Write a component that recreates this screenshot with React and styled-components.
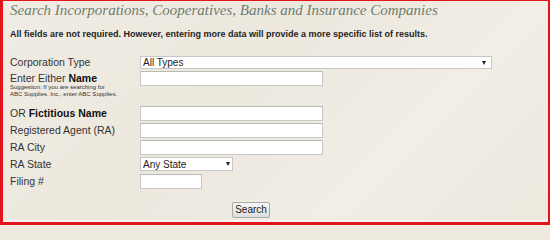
import React from "react";
import styled, { createGlobalStyle } from "styled-components";

const Global = createGlobalStyle`
  html, body { margin: 0; padding: 0; background: #efeae0; }
  body { font-family: "Liberation Sans", Arial, sans-serif; }
  * { box-sizing: border-box; }
`;

const Frame = styled.div`
  width: 550px;
  height: 225px;
  border: 2px solid #e3141c;
  border-left-width: 3px;
  border-top-width: 1px;
  border-bottom-width: 3px;
  background: linear-gradient(135deg, #f1ece3 0%, #ede8de 40%, #f2ede5 70%, #eee9df 100%);
  padding: 0 0 0 7px;
  box-shadow: inset 0 -2px 0 #f6f3ee;
  overflow: hidden;
`;

const Title = styled.h1`
  margin: 0;
  font-family: "Liberation Serif", Georgia, serif;
  font-style: italic;
  font-weight: normal;
  font-size: 15px;
  line-height: 18px;
  color: #6f7e70;
  white-space: nowrap;
`;

const Intro = styled.p`
  margin: 10px 0 0;
  font-size: 9px;
  line-height: 10px;
  font-weight: bold;
  color: #1e1e1e;
  white-space: nowrap;
`;

const Form = styled.form`
  display: flex;
  flex-direction: column;
  gap: 2px;
  margin-top: 17px;
`;

const Row = styled.div`
  display: flex;
  align-items: ${(p) => (p.$top ? "flex-start" : "center")};
  height: ${(p) => (p.$h ? `${p.$h}px` : "auto")};
`;

const LabelCell = styled.div`
  width: 130px;
  flex: none;
  display: flex;
  flex-direction: column;
`;

const Label = styled.label`
  font-size: 10.5px;
  line-height: ${(p) => p.$lh || 15}px;
  color: #333;
  white-space: nowrap;
  b { color: #111; }
`;

const Hint = styled.div`
  font-size: 6px;
  line-height: 7.7px;
  color: #333;
  margin: -2.5px 0 5px;
  white-space: nowrap;
`;

const TextInput = styled.input`
  width: ${(p) => p.$w}px;
  height: ${(p) => p.$h || 15}px;
  border: 1px solid #c7c7c7;
  border-top-color: #b9b9b9;
  background: #fff;
  padding: 0 3px;
  margin: 0;
  font: 10.5px "Liberation Sans", Arial, sans-serif;
  outline: none;
`;

const SelectWrap = styled.div`
  position: relative;
  width: ${(p) => p.$w}px;
  height: ${(p) => p.$h}px;
`;

const Select = styled.select`
  appearance: none;
  -webkit-appearance: none;
  display: block;
  width: 100%;
  height: 100%;
  border: 1px solid #c7c7c7;
  background: #fff;
  border-radius: 0;
  padding: 0 0 0 2px;
  margin: 0;
  font-family: "Liberation Sans", Arial, sans-serif;
  font-size: 10px;
  line-height: 11px;
  color: #222;
  outline: none;
`;

const Arrow = styled.span`
  position: absolute;
  right: ${(p) => p.$r}px;
  top: 50%;
  margin-top: -2px;
  width: 0;
  height: 0;
  border-left: 2.5px solid transparent;
  border-right: 2.5px solid transparent;
  border-top: 4px solid #222;
  pointer-events: none;
`;

const ButtonRow = styled.div`
  display: flex;
  margin-top: 11px;
  padding-left: 222px;
`;

const Button = styled.button`
  width: 38px;
  height: 16px;
  padding: 0;
  font: 10px "Liberation Sans", Arial, sans-serif;
  color: #222;
  border: 1px solid #a9a9a9;
  border-radius: 2px;
  background: linear-gradient(#f7f7f7, #dedede);
`;

export default function App() {
  return (
    <>
      <Global />
      <Frame>
        <Title>Search Incorporations, Cooperatives, Banks and Insurance Companies</Title>
        <Intro>
          All fields are not required. However, entering more data will provide a more specific list of results.
        </Intro>
        <Form onSubmit={(e) => e.preventDefault()}>
          <Row $h={13}>
            <LabelCell>
              <Label $lh={13}>Corporation Type</Label>
            </LabelCell>
            <SelectWrap $w={352} $h={13}>
              <Select defaultValue="all">
                <option value="all">All Types</option>
              </Select>
              <Arrow $r={6} />
            </SelectWrap>
          </Row>
          <Row $top>
            <LabelCell>
              <Label>
                Enter Either <b>Name</b>
              </Label>
              <Hint>
                Suggestion: If you are searching for
                <br />
                ABC Supplies, Inc., enter ABC Supplies.
              </Hint>
            </LabelCell>
            <TextInput $w={183} />
          </Row>
          <Row $h={15}>
            <LabelCell>
              <Label>
                OR <b>Fictitious Name</b>
              </Label>
            </LabelCell>
            <TextInput $w={183} />
          </Row>
          <Row $h={15}>
            <LabelCell>
              <Label>Registered Agent (RA)</Label>
            </LabelCell>
            <TextInput $w={183} />
          </Row>
          <Row $h={15}>
            <LabelCell>
              <Label>RA City</Label>
            </LabelCell>
            <TextInput $w={183} />
          </Row>
          <Row $h={15}>
            <LabelCell>
              <Label>RA State</Label>
            </LabelCell>
            <SelectWrap $w={93} $h={14}>
              <Select defaultValue="any">
                <option value="any">Any State</option>
              </Select>
              <Arrow $r={3} />
            </SelectWrap>
          </Row>
          <Row $h={15}>
            <LabelCell>
              <Label>Filing #</Label>
            </LabelCell>
            <TextInput $w={62} />
          </Row>
          <ButtonRow>
            <Button type="submit">Search</Button>
          </ButtonRow>
        </Form>
      </Frame>
    </>
  );
}
